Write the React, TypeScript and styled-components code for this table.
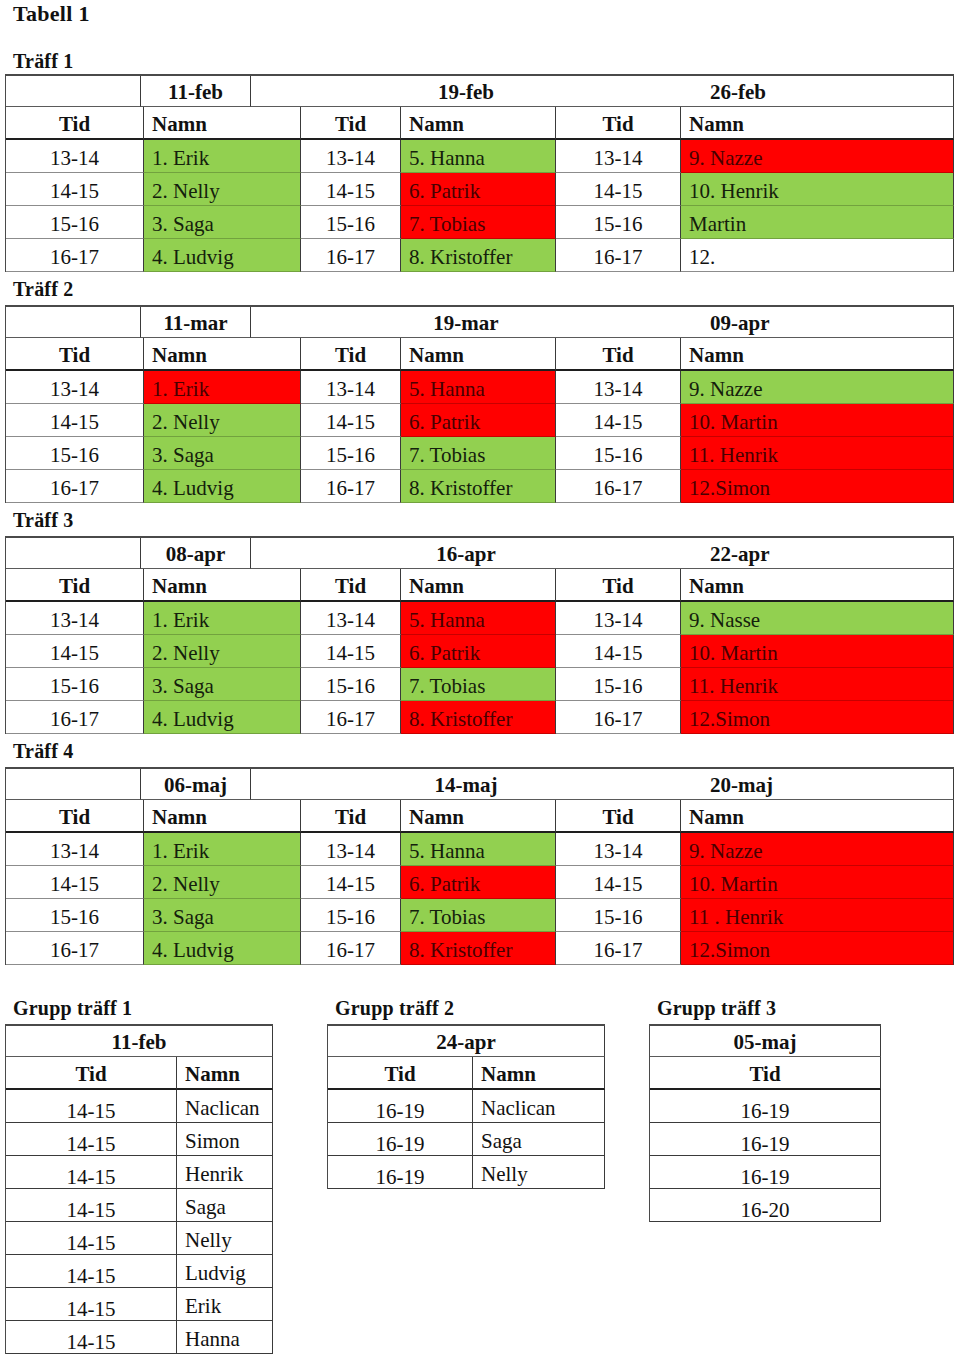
import React from "react";
import styled, { createGlobalStyle } from "styled-components";

const GlobalStyle = createGlobalStyle`
  body {
    margin: 0;
    background: #fff;
    font-family: "Liberation Serif", "Times New Roman", serif;
    color: #111;
  }
`;

type Fill = "g" | "r" | "w";

const fills: Record<Fill, string> = {
  g: "#92d050",
  r: "#ff0000",
  w: "#ffffff",
};

const inks: Record<Fill, string> = {
  g: "#14200c",
  r: "#480000",
  w: "#111111",
};

const Page = styled.div`
  width: 960px;
  height: 1358px;
  overflow: hidden;
  padding-left: 5px;
  box-sizing: border-box;
`;

const Title = styled.h1`
  margin: 0 0 13px 8px;
  font-size: 22px;
  line-height: 28px;
  font-weight: bold;
  letter-spacing: 0.3px;
`;

const Label = styled.h2<{ $drop?: number }>`
  margin: 0 0 0 8px;
  height: 33px;
  display: flex;
  align-items: center;
  padding-top: ${(p) => p.$drop ?? 2}px;
  box-sizing: border-box;
  font-size: 20px;
  font-weight: bold;
  letter-spacing: 0.2px;
`;

const Table = styled.div<{ $width: number }>`
  width: ${(p) => p.$width}px;
  border-left: 1px solid #4a4a4a;
  box-sizing: content-box;
`;

const Row = styled.div<{ $cols: string; $top?: boolean }>`
  display: grid;
  grid-template-columns: ${(p) => p.$cols};
  grid-template-rows: 100%;
  height: 33px;
  box-sizing: border-box;
  border-top: ${(p) => (p.$top ? "2px solid #4a4a4a" : "none")};
`;

const Cell = styled.div<{
  $fill?: Fill;
  $left?: boolean;
  $head?: boolean;
  $line?: string;
  $noRight?: boolean;
  $drop?: number;
}>`
  display: flex;
  align-items: center;
  justify-content: ${(p) => (p.$left ? "flex-start" : "center")};
  padding-left: ${(p) => (p.$left ? "8px" : "0")};
  padding-top: ${(p) => p.$drop ?? 3}px;
  box-sizing: border-box;
  min-height: 0;
  overflow: hidden;
  background: ${(p) => fills[p.$fill ?? "w"]};
  color: ${(p) => inks[p.$fill ?? "w"]};
  font-size: 21px;
  line-height: 22px;
  font-weight: ${(p) => (p.$head ? "bold" : "normal")};
  white-space: nowrap;
  border-right: ${(p) => (p.$noRight ? "none" : "1px solid #3a3a3a")};
  border-bottom: ${(p) =>
    p.$line ??
    (p.$head
      ? "2px solid #1e1e1e"
      : p.$fill && p.$fill !== "w"
      ? "1px solid rgba(0,0,0,0.22)"
      : "1px solid #8c8c8c")};
`;

const DateCell = styled(Cell)<{ $pad?: number }>`
  font-weight: bold;
  justify-content: ${(p) => (p.$pad !== undefined ? "flex-start" : "center")};
  padding-left: ${(p) => p.$pad ?? 0}px;
  border-bottom: 1px solid #5a5a5a;
`;

const GroupArea = styled.div`
  display: grid;
  grid-template-columns: repeat(3, 322px);
  align-items: start;
  margin-top: 26px;
`;

const MAIN_COLS = "138px 157px 100px 155px 125px 273px";
const DATE_COLS = "135px 110px 430px 273px";
const TIMES = ["13-14", "14-15", "15-16", "16-17"];

type Entry = [string, Fill];

interface Meeting {
  label: string;
  dates: [string, string, string];
  names: [Entry[], Entry[], Entry[]];
}

const meetings: Meeting[] = [
  {
    label: "Träff 1",
    dates: ["11-feb", "19-feb", "26-feb"],
    names: [
      [["1. Erik", "g"], ["2. Nelly", "g"], ["3. Saga", "g"], ["4. Ludvig", "g"]],
      [["5. Hanna", "g"], ["6. Patrik", "r"], ["7. Tobias", "r"], ["8. Kristoffer", "g"]],
      [["9. Nazze", "r"], ["10. Henrik", "g"], ["Martin", "g"], ["12.", "w"]],
    ],
  },
  {
    label: "Träff 2",
    dates: ["11-mar", "19-mar", "09-apr"],
    names: [
      [["1. Erik", "r"], ["2. Nelly", "g"], ["3. Saga", "g"], ["4. Ludvig", "g"]],
      [["5. Hanna", "r"], ["6. Patrik", "r"], ["7. Tobias", "g"], ["8. Kristoffer", "g"]],
      [["9. Nazze", "g"], ["10. Martin", "r"], ["11. Henrik", "r"], ["12.Simon", "r"]],
    ],
  },
  {
    label: "Träff 3",
    dates: ["08-apr", "16-apr", "22-apr"],
    names: [
      [["1. Erik", "g"], ["2. Nelly", "g"], ["3. Saga", "g"], ["4. Ludvig", "g"]],
      [["5. Hanna", "r"], ["6. Patrik", "r"], ["7. Tobias", "g"], ["8. Kristoffer", "r"]],
      [["9. Nasse", "g"], ["10. Martin", "r"], ["11. Henrik", "r"], ["12.Simon", "r"]],
    ],
  },
  {
    label: "Träff 4",
    dates: ["06-maj", "14-maj", "20-maj"],
    names: [
      [["1. Erik", "g"], ["2. Nelly", "g"], ["3. Saga", "g"], ["4. Ludvig", "g"]],
      [["5. Hanna", "g"], ["6. Patrik", "r"], ["7. Tobias", "g"], ["8. Kristoffer", "r"]],
      [["9. Nazze", "r"], ["10. Martin", "r"], ["11 . Henrik", "r"], ["12.Simon", "r"]],
    ],
  },
];

interface Group {
  label: string;
  date: string;
  cols: string;
  width: number;
  rows: [string, string?][];
}

const groups: Group[] = [
  {
    label: "Grupp träff 1",
    date: "11-feb",
    cols: "171px 96px",
    width: 267,
    rows: [
      ["14-15", "Naclican"],
      ["14-15", "Simon"],
      ["14-15", "Henrik"],
      ["14-15", "Saga"],
      ["14-15", "Nelly"],
      ["14-15", "Ludvig"],
      ["14-15", "Erik"],
      ["14-15", "Hanna"],
    ],
  },
  {
    label: "Grupp träff 2",
    date: "24-apr",
    cols: "145px 132px",
    width: 277,
    rows: [
      ["16-19", "Naclican"],
      ["16-19", "Saga"],
      ["16-19", "Nelly"],
    ],
  },
  {
    label: "Grupp träff 3",
    date: "05-maj",
    cols: "231px",
    width: 231,
    rows: [["16-19"], ["16-19"], ["16-19"], ["16-20"]],
  },
];

function MeetingTable({ meeting, first }: { meeting: Meeting; first?: boolean }) {
  const [d1, d2, d3] = meeting.dates;
  return (
    <>
      <Label $drop={first ? 8 : 2}>{meeting.label}</Label>
      <Table $width={948}>
        <Row $cols={DATE_COLS} $top>
          <DateCell $drop={2} />
          <DateCell $drop={2}>{d1}</DateCell>
          <DateCell $drop={2} $noRight>{d2}</DateCell>
          <DateCell $drop={2} $pad={29}>{d3}</DateCell>
        </Row>
        <Row $cols={MAIN_COLS}>
          {[0, 1, 2].map((i) => (
            <React.Fragment key={i}>
              <Cell $head>Tid</Cell>
              <Cell $head $left>Namn</Cell>
            </React.Fragment>
          ))}
        </Row>
        {TIMES.map((time, r) => (
          <Row $cols={MAIN_COLS} key={time}>
            {meeting.names.map((col, c) => (
              <React.Fragment key={c}>
                <Cell>{time}</Cell>
                <Cell $left $fill={col[r][1]}>{col[r][0]}</Cell>
              </React.Fragment>
            ))}
          </Row>
        ))}
      </Table>
    </>
  );
}

function GroupTable({ group }: { group: Group }) {
  const hasName = group.rows[0][1] !== undefined;
  return (
    <div>
      <Label>{group.label}</Label>
      <Table $width={group.width}>
        <Row $cols={`${group.width}px`} $top>
          <DateCell $head $drop={2}>{group.date}</DateCell>
        </Row>
        <Row $cols={group.cols}>
          <Cell $head>Tid</Cell>
          {hasName && <Cell $head $left>Namn</Cell>}
        </Row>
        {group.rows.map(([time, name], i) => (
          <Row $cols={group.cols} key={i}>
            <Cell $drop={9} $line="1px solid #3a3a3a">{time}</Cell>
            {hasName && (
              <Cell $left $line="1px solid #3a3a3a">{name}</Cell>
            )}
          </Row>
        ))}
      </Table>
    </div>
  );
}

export default function App() {
  return (
    <Page>
      <GlobalStyle />
      <Title>Tabell 1</Title>
      {meetings.map((m, i) => (
        <MeetingTable meeting={m} first={i === 0} key={m.label} />
      ))}
      <GroupArea>
        {groups.map((g) => (
          <GroupTable group={g} key={g.label} />
        ))}
      </GroupArea>
    </Page>
  );
}
